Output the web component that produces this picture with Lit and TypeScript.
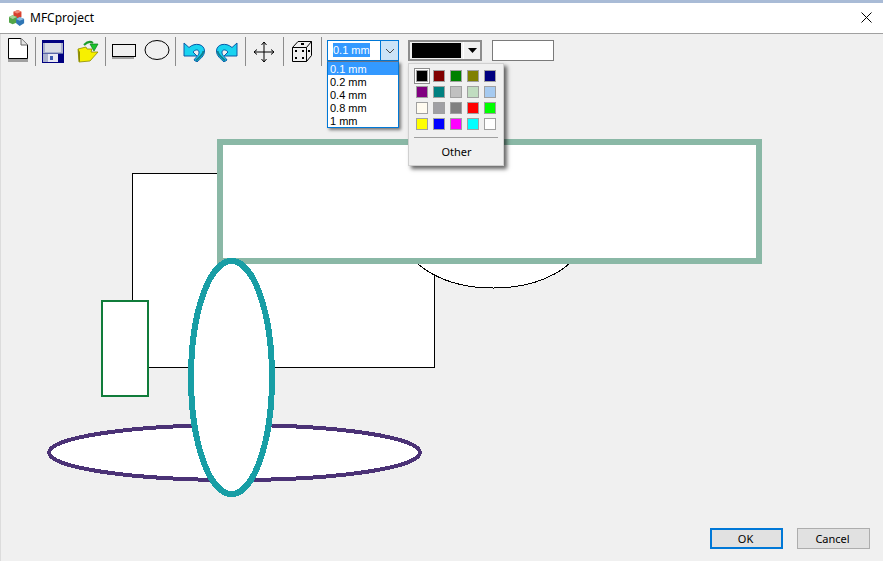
import { LitElement, html, css, svg } from 'lit';
import { customElement } from 'lit/decorators.js';

const SWATCHES = [
  '#000000', '#800000', '#008000', '#808000', '#000080',
  '#800080', '#008080', '#c0c0c0', '#c0dcc0', '#a6caf0',
  '#fffbf0', '#a0a0a4', '#808080', '#ff0000', '#00ff00',
  '#ffff00', '#0000ff', '#ff00ff', '#00ffff', '#ffffff',
];

const WIDTHS = ['0.1 mm', '0.2 mm', '0.4 mm', '0.8 mm', '1 mm'];

const appIcon = svg`<svg width="16" height="16" viewBox="0 0 18 18">
  <path d="M5 2 L10 0 L14 2 L14 8 L9 10 L5 8 Z" fill="#d8402f"/>
  <path d="M10 0 L14 2 L9 4 L5 2 Z" fill="#ee8a78"/>
  <path d="M0 8 L4 6 L9 8 L9 14 L4 16 L0 14 Z" fill="#52a548"/>
  <path d="M4 6 L9 8 L4 10 L0 8 Z" fill="#a5d49a"/>
  <path d="M8 10 L12 8 L17 10 L17 15 L12 18 L8 15 Z" fill="#2f76b5"/>
  <path d="M12 8 L17 10 L12 12 L8 10 Z" fill="#8ebce0"/>
</svg>`;

const newIcon = svg`<svg class="up" width="22" height="24" viewBox="0 0 22 24">
  <rect x="1" y="20" width="20" height="4" fill="#a0a0a0"/>
  <path d="M1.5 0.5 H14 L20.5 7 V20.5 H1.5 Z" fill="#fff" stroke="#000" stroke-linejoin="round"/>
  <path d="M14 0.5 V7 H20.5" fill="#e4e4e4" stroke="#666"/>
</svg>`;

const saveIcon = svg`<svg width="22" height="23" viewBox="0 0 22 23" shape-rendering="crispEdges">
  <rect x="0.5" y="0.5" width="21" height="22" rx="1" fill="#a9b0cc" stroke="#000080"/>
  <rect x="1" y="1" width="20" height="2" fill="#000080"/>
  <rect x="3" y="3" width="16" height="9" fill="#d8dbe4"/>
  <rect x="1" y="13" width="20" height="1" fill="#5a66a8"/>
  <rect x="16" y="14" width="5" height="8" fill="#000080"/>
  <rect x="6" y="14" width="10" height="8" fill="#e8e8f4"/>
  <rect x="8" y="16" width="3" height="4" fill="#3a58b0"/>
</svg>`;

const openIcon = svg`<svg width="22" height="23" viewBox="0 0 22 23">
  <path d="M1 9 L9 7 L10 9 L15 9 L14 12 L21 12 L13 21 L2 22 Z" fill="#f7f000" stroke="#8a8a00" stroke-width="0.8"/>
  <path d="M2 22 L1 9 L3 12 L3 21 Z" fill="#8a8a00"/>
  <path d="M7 5 Q12 0 16 3" fill="none" stroke="#1d9b2a" stroke-width="2"/>
  <path d="M13 4 H21 L17 11 Z" fill="#19c42c" stroke="#0d7a1a" stroke-width="0.7"/>
</svg>`;

const rectIcon = svg`<svg class="push-right" width="24" height="15" viewBox="0 0 24 15" shape-rendering="crispEdges">
  <rect x="0" y="12" width="22" height="3" fill="#a0a0a0"/>
  <rect x="0.5" y="0.5" width="23" height="11.5" fill="#f0f0f0" stroke="#000"/>
</svg>`;

const ellipseIcon = svg`<svg class="push-left up" width="26" height="20" viewBox="0 0 26 20">
  <ellipse cx="13" cy="10" rx="12" ry="9.5" fill="#f0f0f0" stroke="#000"/>
</svg>`;

const arrowBody = svg`
  <path d="M1 1 V14 H14 L10 10 C12 7.5 15.5 7 16 10 C16.5 13 12.5 15.5 11 18 L14 20 C17 17 21.5 14 21.5 9 C21.5 2 12 0 6 5.5 Z" fill="#19d3f0" stroke="#0a5aa8" stroke-width="1"/>
  <path d="M13 18.5 C16 15.5 20 13 20.5 9" fill="none" stroke="#0f7f92" stroke-width="2"/>
`;

const undoIcon = svg`<svg class="push-right" width="22" height="20" viewBox="0 0 22 20">${arrowBody}</svg>`;

const redoIcon = svg`<svg class="push-left" width="22" height="20" viewBox="0 0 22 20">
  <g transform="translate(22 0) scale(-1 1)">${arrowBody}</g>
</svg>`;

const moveIcon = svg`<svg class="push-left" width="22" height="22" viewBox="0 0 22 22" fill="none" stroke="#000">
  <path d="M11 1 V21 M1 11 H21"/>
  <path d="M8.5 4 L11 1 L13.5 4 M8.5 18 L11 21 L13.5 18 M4 8.5 L1 11 L4 13.5 M18 8.5 L21 11 L18 13.5"/>
</svg>`;

const diceIcon = svg`<svg class="push-left" width="20" height="21" viewBox="0 0 20 21">
  <path d="M0.5 6.5 L6 0.5 H19.5 V14.5 L14.5 20.5 H0.5 Z" fill="#f0f0f0" stroke="#000"/>
  <path d="M0.5 6.5 H14.5 V20.5 M14.5 6.5 L19.5 0.5" fill="none" stroke="#000"/>
  <g fill="#000">
    <rect x="3" y="9" width="2" height="2"/><rect x="10" y="9" width="2" height="2"/>
    <rect x="3" y="16" width="2" height="2"/><rect x="10" y="16" width="2" height="2"/>
    <rect x="9" y="2" width="3" height="2"/><rect x="16" y="9" width="2" height="2"/>
  </g>
</svg>`;

@customElement('app-root')
export class AppRoot extends LitElement {
  static styles = css`
    :host {
      display: flex;
      flex-direction: column;
      position: relative;
      width: 883px;
      height: 561px;
      overflow: hidden;
      background: #f0f0f0;
      box-shadow: inset 1px 0 #dcdcdc;
      font-family: 'Noto Sans', 'Open Sans', sans-serif;
      color: #000;
    }

    .desktop {
      position: relative;
      height: 3px;
      background: #a9bbd6;
      flex: none;
    }

    .titlebar {
      position: relative;
      height: 30px;
      background: #fff;
      border-bottom: 1px solid #a0a0a0;
      display: flex;
      align-items: center;
      padding: 0 11px 0 9px;
      gap: 5px;
      font-size: 12px;
      flex: none;
    }

    .titlebar .title {
      flex: 1;
      padding-bottom: 1px;
    }

    .titlebar .close {
      width: 11px;
      height: 11px;
      margin-bottom: 2px;
    }

    .canvas {
      position: absolute;
      left: 0;
      top: 0;
    }

    .toolbar {
      position: relative;
      height: 36px;
      display: flex;
      align-items: flex-start;
      flex: none;
    }

    .tool {
      width: 34.5px;
      height: 29px;
      margin-top: 3px;
      display: flex;
      align-items: center;
      justify-content: center;
      flex: none;
    }

    .tool.first {
      width: 35px;
    }

    .tool.wide {
      width: 37px;
    }

    .tool .up {
      margin-bottom: 3px;
    }

    .tool .push-right {
      margin-left: 2px;
    }

    .tool .push-left {
      margin-right: 2px;
    }

    .sep {
      width: 1px;
      height: 29px;
      margin-top: 3px;
      background: #8c8c8c;
      flex: none;
    }

    .combo {
      position: relative;
      margin: 6px 0 0 5px;
      width: 72px;
      height: 21px;
      box-sizing: border-box;
      border: 1px solid #0078d7;
      background: #fff;
      display: flex;
      font-family: 'Liberation Sans', Arial, sans-serif;
      font-size: 11px;
      flex: none;
    }

    .combo .value {
      flex: 1;
      padding: 2px 0 0 5px;
      line-height: 14px;
    }

    .combo .value span {
      background: #3399ff;
      color: #fff;
      display: inline-block;
      height: 14px;
    }

    .combo .arrow {
      width: 17px;
      border-left: 1px solid #0078d7;
      background: #cce4f7;
      display: flex;
      align-items: center;
      justify-content: center;
    }

    .list {
      position: absolute;
      left: -1px;
      top: 20px;
      width: 72px;
      height: 67px;
      box-sizing: border-box;
      border: 1px solid #0078d7;
      border-top-color: #64748b;
      background: #fff;
      box-shadow: 2px 2px 3px rgba(0, 0, 0, 0.5);
      z-index: 2;
    }

    .list div {
      height: 12px;
      line-height: 13px;
      padding: 1px 0 0 2px;
    }

    .list div.on {
      background: #3399ff;
      color: #fff;
    }

    .color {
      position: relative;
      margin: 6px 0 0 9px;
      width: 74px;
      height: 21px;
      box-sizing: border-box;
      border: 2px solid #8c8c8c;
      background: #f0f0f0;
      display: flex;
      align-items: center;
      padding-left: 2px;
      flex: none;
    }

    .color .chip {
      width: 50px;
      height: 15px;
      background: #000;
    }

    .color .arrow {
      margin-left: 2px;
      width: 16px;
      height: 17px;
      background: #f0f0f0;
      border-left: 1px solid #fff;
      display: flex;
      align-items: center;
      justify-content: center;
    }

    .menu {
      position: absolute;
      left: -2px;
      top: 21px;
      width: 96px;
      height: 103px;
      box-sizing: border-box;
      background: #f0f0f0;
      border: 1px solid #d0d0d0;
      box-shadow: 3px 3px 4px rgba(0, 0, 0, 0.6);
      z-index: 2;
      padding: 6px 5px 0 7px;
    }

    .grid {
      display: grid;
      grid-template-columns: repeat(5, 12px);
      grid-auto-rows: 12px;
      column-gap: 5px;
      row-gap: 4px;
    }

    .swatch {
      box-sizing: border-box;
      border: 1px solid #a0a0a0;
    }

    .swatch.first {
      outline: 1px solid #8c8c8c;
      outline-offset: 1px;
      box-shadow: 0 0 0 1px #fff;
    }

    .menu hr {
      margin: 7px 0 0 -2px;
      border: 0;
      height: 1px;
      width: 84px;
      background: #a0a0a0;
    }

    .menu .other {
      text-align: center;
      font-size: 11px;
      line-height: 14px;
      margin: 7px 0 0 -1px;
    }

    .input {
      margin: 6px 0 0 10px;
      width: 62px;
      height: 21px;
      box-sizing: border-box;
      border: 1px solid #7a7a7a;
      background: #fff;
      flex: none;
    }

    .footer {
      position: relative;
      margin-top: auto;
      padding: 0 13px 12px 0;
      display: flex;
      justify-content: flex-end;
      gap: 14px;
    }

    .btn {
      width: 73px;
      height: 21px;
      box-sizing: border-box;
      border: 1px solid #adadad;
      background: #e1e1e1;
      font-size: 11px;
      line-height: 19px;
      text-align: center;
      padding-right: 2px;
    }

    .btn.primary {
      border: 2px solid #0078d7;
      line-height: 17px;
    }
  `;

  private renderCanvas() {
    return html`<svg class="canvas" width="883" height="561" viewBox="0 0 883 561" shape-rendering="crispEdges">
      <rect x="132.5" y="173.5" width="302" height="194" fill="#fff" stroke="#000"/>
      <ellipse cx="493.5" cy="238" rx="88" ry="50" fill="#fff" stroke="#000"/>
      <rect x="220" y="142" width="539" height="119" fill="#fff" stroke="#8ab8a6" stroke-width="6"/>
      <rect x="102" y="301" width="46" height="95" fill="#fff" stroke="#107c3a" stroke-width="2"/>
      <ellipse cx="234.5" cy="452.5" rx="185.5" ry="27.5" fill="#fff" stroke="#4b3276" stroke-width="4"/>
      <ellipse cx="231.5" cy="377.5" rx="40.5" ry="116.5" fill="#fff" stroke="#189ea5" stroke-width="6"/>
    </svg>`;
  }

  render() {
    return html`
      ${this.renderCanvas()}
      <div class="desktop"></div>
      <div class="titlebar">
        ${appIcon}
        <span class="title">MFCproject</span>
        <svg class="close" viewBox="0 0 11 11" stroke="#000" fill="none">
          <path d="M0.5 0.5 L10.5 10.5 M10.5 0.5 L0.5 10.5"/>
        </svg>
      </div>
      <div class="toolbar">
        <div class="tool first">${newIcon}</div>
        <div class="sep"></div>
        <div class="tool">${saveIcon}</div>
        <div class="tool">${openIcon}</div>
        <div class="sep"></div>
        <div class="tool">${rectIcon}</div>
        <div class="tool">${ellipseIcon}</div>
        <div class="sep"></div>
        <div class="tool">${undoIcon}</div>
        <div class="tool">${redoIcon}</div>
        <div class="sep"></div>
        <div class="tool wide">${moveIcon}</div>
        <div class="sep"></div>
        <div class="tool wide">${diceIcon}</div>
        <div class="sep"></div>
        <div class="combo">
          <div class="value"><span>0.1 mm</span></div>
          <div class="arrow">
            <svg width="10" height="6" viewBox="0 0 10 6" fill="none" stroke="#4a4a4a">
              <path d="M1 1 L5 5 L9 1"/>
            </svg>
          </div>
          <div class="list">
            ${WIDTHS.map((w, i) => html`<div class=${i === 0 ? 'on' : ''}>${w}</div>`)}
          </div>
        </div>
        <div class="color">
          <div class="chip"></div>
          <div class="arrow">
            <svg width="9" height="5" viewBox="0 0 9 5"><path d="M0 0 H9 L4.5 5 Z" fill="#000"/></svg>
          </div>
          <div class="menu">
            <div class="grid">
              ${SWATCHES.map(
                (c, i) => html`<div
                  class="swatch ${i === 0 ? 'first' : ''}"
                  style="background:${c}"
                ></div>`
              )}
            </div>
            <hr />
            <div class="other">Other</div>
          </div>
        </div>
        <div class="input"></div>
      </div>
      <div class="footer">
        <div class="btn primary">OK</div>
        <div class="btn">Cancel</div>
      </div>
    `;
  }
}
